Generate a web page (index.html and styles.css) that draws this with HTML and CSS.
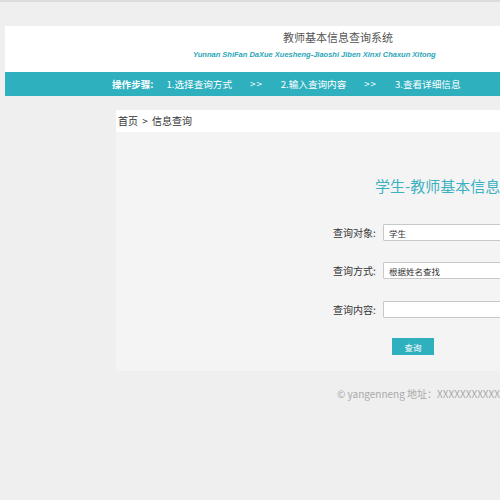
FILE: index.html
```html
<!DOCTYPE html>
<html lang="zh-CN">
<head>
<meta charset="utf-8">
<title>教师基本信息查询系统</title>
<link rel="stylesheet" href="styles.css">
</head>
<body>
<div class="page">
  <header class="header">
    <div class="title">教师基本信息查询系统</div>
    <div class="subtitle">Yunnan ShiFan DaXue Xuesheng-Jiaoshi Jiben Xinxi Chaxun Xitong</div>
  </header>
  <nav class="nav">
    <span class="nav-label">操作步骤:</span>
    <span class="step">1.选择查询方式</span>
    <span class="arrow">&gt;&gt;</span>
    <span class="step">2.输入查询内容</span>
    <span class="arrow">&gt;&gt;</span>
    <span class="step">3.查看详细信息</span>
  </nav>
  <main class="main">
    <div class="crumb">首页 &gt; 信息查询</div>
    <div class="content">
      <h1 class="heading">学生-教师基本信息查询</h1>
      <form class="form">
        <div class="row">
          <label class="label">查询对象:</label>
          <select class="field"><option>学生</option><option>教师</option></select>
        </div>
        <div class="row">
          <label class="label">查询方式:</label>
          <select class="field"><option>根据姓名查找</option></select>
        </div>
        <div class="row">
          <label class="label">查询内容:</label>
          <input class="field input" type="text">
        </div>
        <div class="btn-row">
          <button class="btn" type="button">查询</button>
        </div>
      </form>
    </div>
  </main>
  <footer class="footer">© yangenneng 地址：XXXXXXXXXXX</footer>
</div>
</body>
</html>
```
FILE: styles.css
```css
html, body {
  margin: 0;
  padding: 0;
}
body {
  background: #efefef;
  border-top: 2px solid #dcdcdc;
  overflow: hidden;
  font-family: "Noto Sans CJK SC", "Open Sans", sans-serif;
  color: #333;
}
.page {
  width: 1100px;
}
.header {
  margin: 24px 0 0 5px;
  height: 46px;
  background: #fff;
  box-sizing: border-box;
  padding-top: 3px;
}
.title {
  padding-left: 278px;
  font-size: 11px;
  line-height: 16px;
  color: #555;
}
.subtitle {
  padding-left: 188px;
  margin-top: 5px;
  font-family: "Liberation Sans", Arial, sans-serif;
  font-size: 7.5px;
  line-height: 10px;
  font-weight: bold;
  font-style: italic;
  color: #2aa6b8;
}
.nav {
  margin-left: 5px;
  height: 24px;
  background: #2fb0bf;
  display: flex;
  align-items: center;
  padding-left: 107px;
  font-size: 9.6px;
  color: #fff;
}
.nav-label {
  font-weight: bold;
  margin-right: 13px;
}
.arrow {
  margin: 0 18px 0 18px;
  letter-spacing: 1px;
}
.main {
  margin: 14px 0 0 116px;
  width: 700px;
}
.crumb {
  background: #fff;
  height: 22px;
  line-height: 22px;
  padding-left: 2px;
  font-size: 10px;
  color: #333;
  word-spacing: 2px;
}
.content {
  background: #f4f4f4;
  height: 239px;
  box-sizing: border-box;
  padding-top: 43px;
}
.heading {
  margin: 0;
  padding-left: 259px;
  font-size: 15px;
  line-height: 22px;
  font-weight: normal;
  color: #3cb1c2;
}
.form {
  margin-top: 27px;
  padding-left: 217px;
}
.row {
  display: flex;
  align-items: center;
  height: 17px;
  margin-bottom: 21px;
}
.row:nth-child(2) {
  margin-bottom: 22px;
}
.row:nth-child(3) {
  margin-bottom: 20px;
}
.label {
  width: 50px;
  font-size: 10px;
  color: #333;
}
.field {
  width: 200px;
  height: 17px;
  box-sizing: border-box;
  border: 1px solid #c8c8c8;
  background: #fff;
  font-family: "Noto Sans CJK SC", sans-serif;
  font-size: 8.5px;
  padding: 0 1px;
  color: #333;
  border-radius: 1px;
}
.input {
  padding: 0 3px;
}
.btn-row {
  padding-left: 59px;
}
.btn {
  width: 42px;
  height: 17px;
  border: none;
  background: #2fb0bf;
  color: #fff;
  font-family: "Noto Sans CJK SC", sans-serif;
  font-size: 8.5px;
  padding: 0;
  display: block;
}
.footer {
  padding-left: 337px;
  margin-top: 16px;
  font-size: 10px;
  line-height: 14px;
  color: #aaa;
}
```
